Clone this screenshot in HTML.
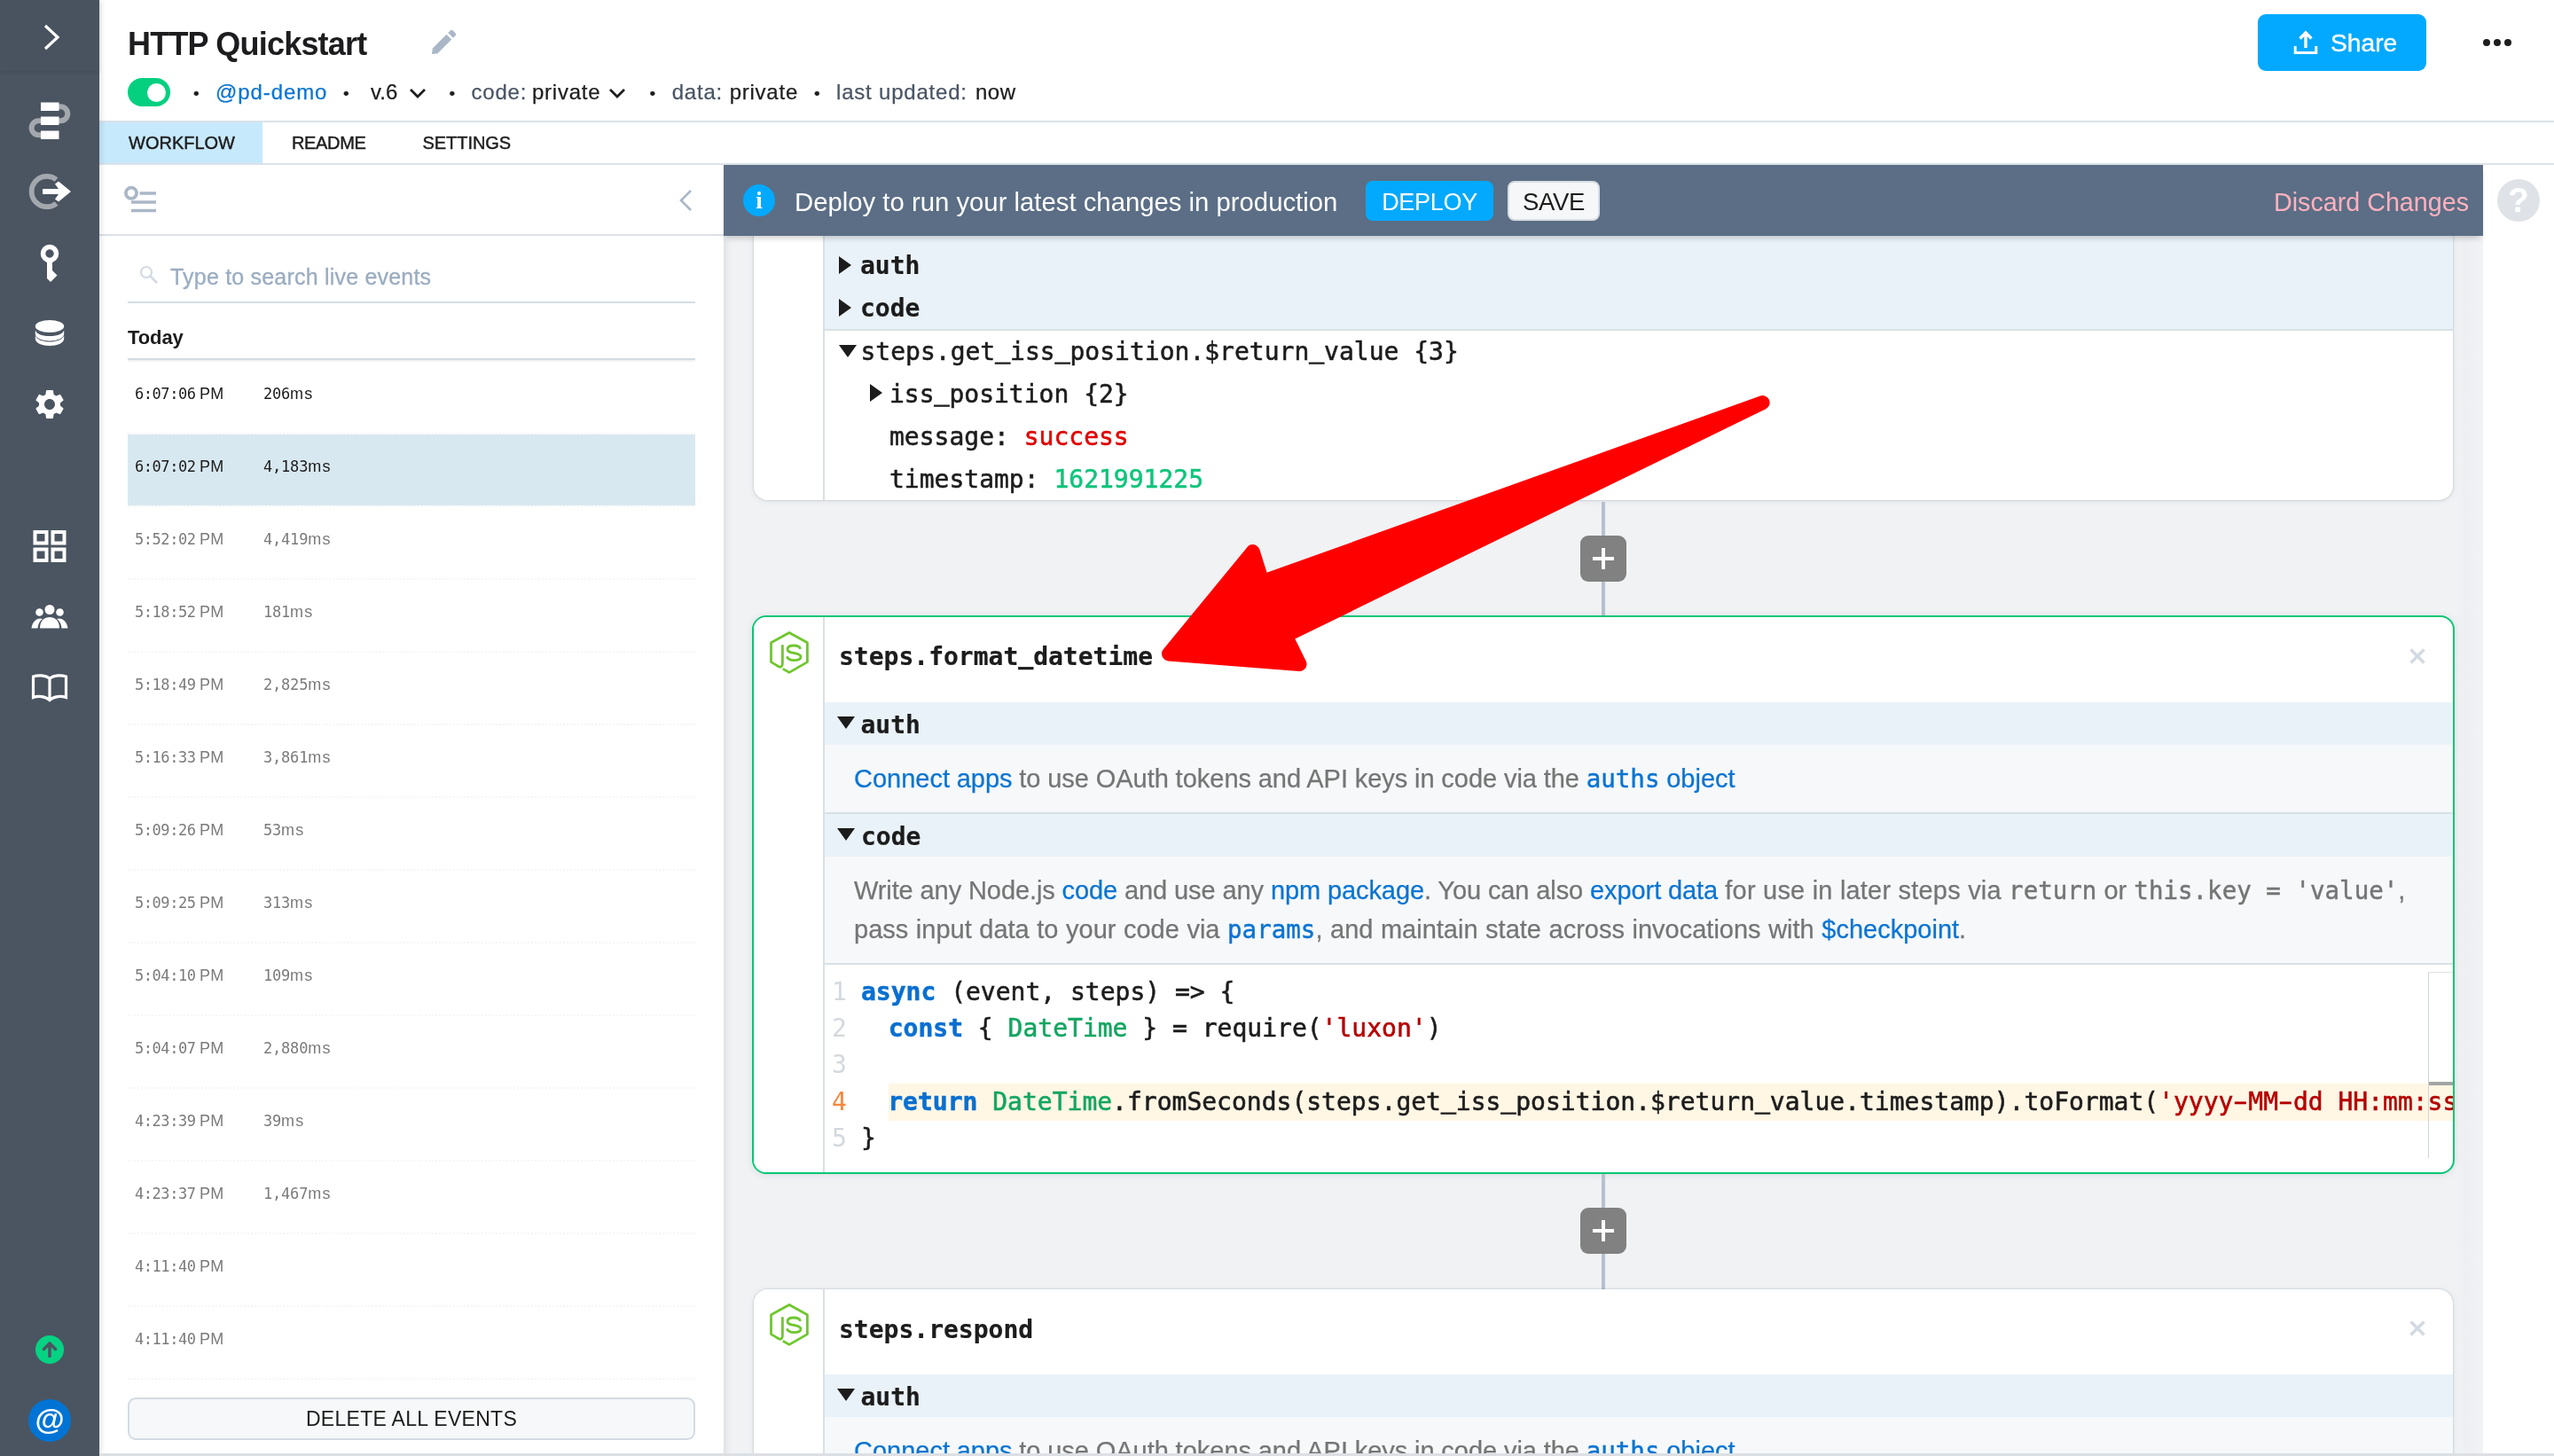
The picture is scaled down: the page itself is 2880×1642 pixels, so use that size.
<!DOCTYPE html>
<html lang="en">
<head>
<meta charset="utf-8">
<title>HTTP Quickstart</title>
<style>
*{box-sizing:border-box;margin:0;padding:0}
html,body{width:2880px;height:1642px;overflow:hidden;background:#fff}
body{position:relative;will-change:transform;font-family:"Liberation Sans",sans-serif;color:#1c1c1c;-webkit-font-smoothing:antialiased}
.abs{position:absolute}
.mono{font-family:"DejaVu Sans Mono","Liberation Mono",monospace}
a{color:#0a74d1;text-decoration:none}

/* sidebar */
#side{position:absolute;left:0;top:0;width:112px;height:1642px;background:#4b5561;z-index:30;box-shadow:2px 0 6px rgba(0,0,0,.12)}
#side .top{position:absolute;left:0;top:0;width:112px;height:80px;background:#49535f;box-shadow:0 2px 4px rgba(0,0,0,.10)}
#side svg{position:absolute}

/* header */
#hdr{position:absolute;left:112px;top:0;width:2768px;height:138px;background:#fff;border-bottom:2px solid #dbe2e8}
#title{position:absolute;left:144px;top:27.500px;font-size:36px;font-weight:700;line-height:44px;letter-spacing:-0.8px;color:#1d1d1f;white-space:nowrap}
#meta{position:absolute;left:0;top:0;font-size:24px;line-height:32px;white-space:nowrap;color:#1e1e1e}
#meta span{position:absolute;top:88px;white-space:nowrap;-webkit-text-stroke:.25px currentColor}
.dot{color:#1e1e1e;font-size:19px;margin-top:1.500px;margin-left:1px}
.lbl{color:#4a5563}

/* tabs */
#tabs{position:absolute;left:112px;top:138px;width:2768px;height:48px;background:#fff;border-bottom:2px solid #dbe2e8}
.tab{position:absolute;top:0;height:46px;line-height:46px;font-size:20px;letter-spacing:.6px;color:#1e1e1e;white-space:nowrap;-webkit-text-stroke:.45px #1e1e1e}

/* left panel */
#left{position:absolute;left:112px;top:186px;width:704px;height:1456px;background:#fff}
#left .hd{position:absolute;left:0;top:0;width:704px;height:80px;border-bottom:2px solid #dbe2e8}
.ev{position:absolute;left:32px;width:640px;height:82px;border-bottom:2px dotted #f5f6f8;font-family:"DejaVu Sans Mono","Liberation Mono",monospace;font-size:17px;letter-spacing:-.45px;color:#7b7b7b}
.ev span{position:absolute;top:0;line-height:72px;white-space:nowrap}
.ev .t{left:8px}.ev .d{left:153px;letter-spacing:-.2px}.ev i{font-style:normal;font-family:"Liberation Sans",sans-serif;font-size:18px;letter-spacing:1.2px}.ev .t i{letter-spacing:.4px;word-spacing:-1px}

/* main */
#main{position:absolute;left:816px;top:186px;width:1984px;height:1456px;background:#f0f2f4;overflow:hidden;box-shadow:inset 8px 0 8px -7px rgba(90,100,110,.20)}
#banner{position:absolute;left:816px;top:186px;width:1984px;height:80px;background:#5b6e85;z-index:10;box-shadow:0 5px 7px -3px rgba(0,0,0,.22)}
.card{position:absolute;left:34px;width:1918px;background:#fff;border-radius:16px;box-shadow:0 0 2px rgba(70,90,110,.40),0 1px 7px rgba(70,90,110,.10);overflow:hidden}
.card .lc{position:absolute;left:0;top:0;bottom:0;width:80px;border-right:2px solid #d9e0e6;background:#fff}
.sec{position:absolute;left:80px;right:0;background:#eaf2f9}
.body{position:absolute;left:80px;right:0;background:#f6f8fa}
.hl{position:absolute;left:80px;right:0;height:2px;background:#d9e0e6}
.row{position:absolute;white-space:nowrap;font-size:28px;line-height:48px}
.b{font-weight:700}
.mono u{text-decoration:none;position:relative;top:-3px;-webkit-text-stroke:1px currentColor}
.row.mono,.code.mono{-webkit-text-stroke:.55px currentColor}
.row.mono.b{-webkit-text-stroke:.2px currentColor}
.row.mono.b u{-webkit-text-stroke:.6px currentColor;top:-2px}
.hy{font-weight:400;display:inline-block;transform:scaleX(1.700)}
.p{position:absolute;white-space:nowrap;font-size:29px;line-height:44px;color:#757575;font-family:"Liberation Sans",sans-serif}
.p .mono{font-size:27.500px;-webkit-text-stroke:.45px currentColor}
.p{-webkit-text-stroke:.25px currentColor}
.tri{position:absolute;width:0;height:0}
.tri.r{border-left:14px solid #1c1c1c;border-top:10px solid transparent;border-bottom:10px solid transparent}
.tri.d{border-top:14px solid #1c1c1c;border-left:10.5px solid transparent;border-right:10.5px solid transparent}
.plus{position:absolute;width:52px;height:52px;border-radius:9px;background:#818181}
.plus:before{content:"";position:absolute;left:14px;top:23.800px;width:24px;height:4.200px;background:#fff}
.plus:after{content:"";position:absolute;left:23.900px;top:14px;width:4.200px;height:24px;background:#fff}
.vline{position:absolute;left:990px;width:4px;background:#b7c1ce}
.code{position:absolute;white-space:pre;font-size:28px;line-height:42px;color:#1c1c1c}
.ln{position:absolute;font-size:28px;line-height:42px;color:#d3d8dd;width:30px;text-align:left}
.kw{color:#0a6fd0;font-weight:700}.ty{color:#14a562}.st{color:#b50000}
</style>
</head>
<body>
<div id="side">
<div class="top"></div>
<!-- chevron -->
<svg style="left:43px;top:24px" width="32" height="36" viewBox="0 0 32 36"><path d="M8 5 L22 18 L8 31" fill="none" stroke="#fff" stroke-width="3.2"/></svg>
<!-- workflow -->
<svg style="left:28px;top:110px" width="56" height="52" viewBox="0 0 56 52">
<path d="M38 10.200 h2.300 a8 8 0 0 1 0 16 h-2.300" fill="none" stroke="#a3a8ae" stroke-width="6"/>
<path d="M18 26.200 h-2.400 a8 8 0 0 0 0 16 h2.400" fill="none" stroke="#a3a8ae" stroke-width="6"/>
<rect x="18" y="5.5" width="20.5" height="9.5" fill="#fff"/><rect x="18" y="21.5" width="20.5" height="9.5" fill="#fff"/><rect x="18" y="37.5" width="20.5" height="9.5" fill="#fff"/>
</svg>
<!-- arrow circle -->
<svg style="left:28px;top:190px" width="56" height="52" viewBox="0 0 56 52">
<path d="M35.600 12.600 A17.200 17.200 0 1 0 35.600 39.400" fill="none" stroke="#a3a8ae" stroke-width="5.800"/>
<path d="M20 23 H38 L34 17.5 L38 14.5 L52 26 L38 37.5 L34 34.5 L38 29 H20 Z" fill="#fff"/>
</svg>
<!-- key -->
<svg style="left:36px;top:272px" width="40" height="52" viewBox="0 0 40 52">
<circle cx="20" cy="14" r="7.5" fill="none" stroke="#fff" stroke-width="5.5"/>
<path d="M17 22 H23 V33 L28.5 38.5 L21 46 L17 42 Z" fill="#fff"/>
</svg>
<!-- db -->
<svg style="left:36px;top:358px" width="40" height="36" viewBox="0 0 40 36">
<ellipse cx="20" cy="10" rx="16.2" ry="7" fill="#fff"/>
<path d="M3.8 14.5 C6 19.5 13 21 20 21 S34 19.500 36.200 14.500 V18.500 C36.200 23.500 28 26.500 20 26.500 S3.800 23.500 3.800 18.500 Z" fill="#fff"/>
<path d="M3.8 20.500 C6 25.500 13 27.5 20 27.5 S34 25.500 36.200 20.500 V24 C36.200 29 28 32 20 32 S3.800 29 3.800 24 Z" fill="#fff"/>
</svg>
<!-- gear -->
<svg style="left:36px;top:436px" width="40" height="40" viewBox="0 0 24 24"><path fill="#fff" d="M19.14 12.94c.04-.3.06-.61.06-.94 0-.32-.02-.64-.07-.94l2.030-1.580c.18-.14.23-.41.12-.61l-1.920-3.320c-.12-.22-.37-.29-.59-.22l-2.390.96c-.5-.38-1.030-.7-1.620-.94l-.36-2.540c-.04-.24-.24-.41-.48-.41h-3.840c-.24 0-.43.170-.47.410l-.36 2.540c-.59.240-1.130.570-1.620.940l-2.390-.96c-.22-.08-.47 0-.59.220L2.740 8.870c-.12.210-.08.470.12.610l2.030 1.580c-.05.300-.09.630-.09.940s.02.640.07.940l-2.030 1.580c-.18.140-.23.410-.12.610l1.920 3.320c.12.220.37.290.59.220l2.390-.96c.5.380 1.030.7 1.620.94l.36 2.540c.05.240.24.410.48.410h3.840c.24 0 .44-.17.470-.41l.36-2.540c.59-.24 1.130-.56 1.620-.94l2.390.96c.22.080.47 0 .59-.22l1.920-3.320c.12-.22.070-.47-.12-.61l-2.010-1.580zM12 15.600c-1.980 0-3.600-1.620-3.600-3.600s1.620-3.600 3.600-3.600 3.600 1.620 3.600 3.600-1.620 3.600-3.600 3.600z"/></svg>
<!-- grid -->
<svg style="left:36px;top:596px" width="40" height="40" viewBox="0 0 40 40" fill="none" stroke="#fff" stroke-width="4"><rect x="3.500" y="4" width="13" height="12.500"/><rect x="23.500" y="4" width="13" height="12.500"/><rect x="3.500" y="23.500" width="13" height="12.500"/><rect x="23.500" y="23.500" width="13" height="12.500"/></svg>
<!-- people -->
<svg style="left:34px;top:680px" width="44" height="30" viewBox="0 0 44 30" fill="#fff">
<circle cx="22" cy="7.500" r="5.500"/><circle cx="10.500" cy="10.500" r="4.300"/><circle cx="33.500" cy="10.500" r="4.300"/>
<path d="M11 28.500 C11 20 16 16 22 16 S33 20 33 28.500 Z"/>
<path d="M1.500 28.500 C2.500 21.500 6.500 17.500 11.500 17.500 C12.500 17.500 13.300 17.700 14 18 C10.500 20.500 9 24 8.500 28.500 Z"/>
<path d="M42.500 28.500 C41.500 21.500 37.500 17.500 32.500 17.500 C31.500 17.500 30.700 17.700 30 18 C33.500 20.500 35 24 35.500 28.500 Z"/>
</svg>
<!-- book -->
<svg style="left:34px;top:758px" width="44" height="36" viewBox="0 0 44 36" fill="none" stroke="#fff" stroke-width="3.200" stroke-linejoin="miter"><path d="M22 7 C17 3.500 9 3 3.500 5 V28.500 C9 26.500 17 27 22 31.500 C27 27 35 26.500 40.500 28.500 V5 C35 3 27 3.500 22 7 Z M22 7 V31"/></svg>
<!-- green up -->
<svg style="left:40px;top:1506px" width="32" height="32" viewBox="0 0 32 32"><circle cx="16" cy="16" r="16" fill="#05d383"/><path d="M16 23.500 V10 M9.500 15.500 L16 9 L22.500 15.500" fill="none" stroke="#4b5561" stroke-width="3.600" stroke-linecap="round" stroke-linejoin="round"/></svg>
<!-- at -->
<div style="position:absolute;left:32px;top:1578px;width:48px;height:48px;border-radius:24px;background:#0074d4;color:#fff;font:700 34px/44px 'Liberation Sans',sans-serif;text-align:center">@</div>
</div>

<div id="hdr"></div>
<div id="title">HTTP Quickstart</div>
<svg class="abs" style="left:484px;top:32px" width="32" height="32" viewBox="0 0 32 32"><path d="M3 29 L3.800 22.500 L19.500 6.800 L25.200 12.500 L9.500 28.200 Z M21.300 5 L24 2.300 a1.800 1.800 0 0 1 2.500 0 L29.700 5.500 a1.800 1.800 0 0 1 0 2.500 L27 10.700 Z" fill="#aab7c7"/></svg>
<div class="abs" style="left:144px;top:88px;width:48px;height:32px;border-radius:16px;background:#04d080"><div class="abs" style="left:21.500px;top:5.500px;width:21px;height:21px;border-radius:10.500px;background:#fff"></div></div>
<div id="meta">
<span class="dot" style="left:217px">•</span>
<span style="left:243px;letter-spacing:.9px"><a>@pd-demo</a></span>
<span class="dot" style="left:386px">•</span>
<span style="left:418px">v.6</span>
<svg class="abs" style="left:459px;top:97px" width="24" height="16" viewBox="0 0 24 16"><path d="M4 4 L12 12 L20 4" fill="none" stroke="#1e1e1e" stroke-width="2.800"/></svg>
<span class="dot" style="left:505.500px">•</span>
<span class="lbl" style="left:531.500px;letter-spacing:.8px">code:</span>
<span style="left:600px;letter-spacing:.75px">private</span>
<svg class="abs" style="left:683.500px;top:97px" width="24" height="16" viewBox="0 0 24 16"><path d="M4 4 L12 12 L20 4" fill="none" stroke="#1e1e1e" stroke-width="2.800"/></svg>
<span class="dot" style="left:731.500px">•</span>
<span class="lbl" style="left:757.700px;letter-spacing:.8px">data:</span>
<span style="left:822.700px;letter-spacing:.75px">private</span>
<span class="dot" style="left:917px">•</span>
<span class="lbl" style="left:943px;letter-spacing:.8px">last updated:</span>
<span style="left:1100px;letter-spacing:.5px">now</span>
</div>
<div class="abs" style="left:2546px;top:16px;width:190px;height:64px;border-radius:9px;background:#02a9fe"></div>
<svg class="abs" style="left:2583px;top:32px" width="32" height="32" viewBox="0 0 32 32" fill="none" stroke="#fff" stroke-width="3"><path d="M5.200 20 V27.500 H28.800 V20"/><path d="M17 22 V5.500 M10.500 11.500 L17 5 L23.500 11.500" stroke-width="3.400"/></svg>
<div class="abs" style="left:2628px;top:28px;font-size:28.200px;line-height:40px;color:#fff;white-space:nowrap;-webkit-text-stroke:.35px #fff">Share</div>
<div class="abs" style="left:2800px;top:44px;width:8px;height:8px;border-radius:4px;background:#1e1e1e;box-shadow:12px 0 0 #1e1e1e,24px 0 0 #1e1e1e"></div>

<div id="tabs">
<div class="abs" style="left:0;top:0;width:184px;height:46px;background:#c7e9fc"></div>
<div class="tab" style="left:33px;letter-spacing:0">WORKFLOW</div>
<div class="tab" style="left:217px;letter-spacing:-.35px">README</div>
<div class="tab" style="left:364.500px;letter-spacing:-.05px">SETTINGS</div>
</div>

<div id="left">
<div class="hd"></div>
<svg class="abs" style="left:26px;top:22px" width="40" height="36" viewBox="0 0 40 36"><circle cx="10" cy="9.800" r="6.100" fill="none" stroke="#aab7c7" stroke-width="3.800"/><path d="M19.500 10 H38 M10 20 H38 M10 29.500 H38" stroke="#aab7c7" stroke-width="3.600" fill="none"/></svg>
<svg class="abs" style="left:650px;top:26px" width="24" height="28" viewBox="0 0 24 28"><path d="M17 3 L6 14 L17 25" fill="none" stroke="#aab7c7" stroke-width="2.600"/></svg>
<svg class="abs" style="left:44px;top:111.500px" width="24" height="24" viewBox="0 0 24 24"><circle cx="9" cy="9" r="6" fill="none" stroke="#d3dae1" stroke-width="2.200"/><path d="M13.500 13.500 L21 21" stroke="#d3dae1" stroke-width="2.600"/></svg>
<div class="abs" style="left:80px;top:106px;font-size:25px;letter-spacing:.2px;line-height:40px;color:#9aacc0;-webkit-text-stroke:.3px #9aacc0;white-space:nowrap">Type to search live events</div>
<div class="abs" style="left:32px;top:154px;width:640px;height:2px;background:#d5dde4"></div>
<div class="abs" style="left:32px;top:177px;font-size:22px;letter-spacing:-.1px;font-weight:700;line-height:36px;color:#1c1c1c;white-space:nowrap">Today</div>
<div class="abs" style="left:32px;top:218px;width:640px;height:2px;background:#d3dbe3;box-shadow:0 2px 0 #f1f3f5"></div>
<div class="ev" style="top:222px;color:#1c1c1c;"><span class="t">6:07:06<i> PM</i></span><span class="d">206<i>ms</i></span></div>
<div class="ev" style="top:304px;color:#1c1c1c;background:#d8e8f0;background-clip:padding-box;"><span class="t">6:07:02<i> PM</i></span><span class="d">4,183<i>ms</i></span></div>
<div class="ev" style="top:386px;"><span class="t">5:52:02<i> PM</i></span><span class="d">4,419<i>ms</i></span></div>
<div class="ev" style="top:468px;"><span class="t">5:18:52<i> PM</i></span><span class="d">181<i>ms</i></span></div>
<div class="ev" style="top:550px;"><span class="t">5:18:49<i> PM</i></span><span class="d">2,825<i>ms</i></span></div>
<div class="ev" style="top:632px;"><span class="t">5:16:33<i> PM</i></span><span class="d">3,861<i>ms</i></span></div>
<div class="ev" style="top:714px;"><span class="t">5:09:26<i> PM</i></span><span class="d">53<i>ms</i></span></div>
<div class="ev" style="top:796px;"><span class="t">5:09:25<i> PM</i></span><span class="d">313<i>ms</i></span></div>
<div class="ev" style="top:878px;"><span class="t">5:04:10<i> PM</i></span><span class="d">109<i>ms</i></span></div>
<div class="ev" style="top:960px;"><span class="t">5:04:07<i> PM</i></span><span class="d">2,880<i>ms</i></span></div>
<div class="ev" style="top:1042px;"><span class="t">4:23:39<i> PM</i></span><span class="d">39<i>ms</i></span></div>
<div class="ev" style="top:1124px;"><span class="t">4:23:37<i> PM</i></span><span class="d">1,467<i>ms</i></span></div>
<div class="ev" style="top:1206px;"><span class="t">4:11:40<i> PM</i></span><span class="d"></span></div>
<div class="ev" style="top:1288px;"><span class="t">4:11:40<i> PM</i></span><span class="d"></span></div>
<div class="abs" style="left:0;top:1370px;width:704px;height:86px;background:#fff"></div>
<div class="abs" style="left:32px;top:1390px;width:640px;height:48px;border:2px solid #d3dbe2;border-radius:9px;background:#f6f8fa;text-align:center;font-size:23px;line-height:44px;letter-spacing:.3px;color:#1c1c1c">DELETE ALL EVENTS</div>
</div>

<div id="main">
<!-- card 1 : top hidden by banner. main top = 186 -->
<div class="card" style="top:-60px;height:438px;width:1916px">
  <div class="lc"></div>
  <div class="sec" style="top:0;height:245px"></div>
  <div class="hl" style="top:245px"></div>
  <div class="tri r" style="left:96px;top:162.500px"></div>
  <div class="row mono b" style="left:120px;top:150px">auth</div>
  <div class="tri r" style="left:96px;top:210.500px"></div>
  <div class="row mono b" style="left:120px;top:198px">code</div>
  <div class="tri d" style="left:96px;top:263px"></div>
  <div class="row mono" style="left:120.500px;top:247px">steps.get<u>_</u>iss<u>_</u>position.$return<u>_</u>value {3}</div>
  <div class="tri r" style="left:131px;top:307px"></div>
  <div class="row mono" style="left:153px;top:294.500px">iss<u>_</u>position {2}</div>
  <div class="row mono" style="left:153px;top:343px">message: <span style="color:#e00000">success</span></div>
  <div class="row mono" style="left:153px;top:391px">timestamp: <span style="color:#10c47c">1621991225</span></div>
</div>
<div class="vline" style="top:380px;height:128px"></div>
<div class="plus" style="left:966px;top:418px"></div>

<!-- card 2 -->
<div class="card" style="top:508px;height:630px;box-shadow:0 1px 8px rgba(40,50,60,.10);border:2px solid #04c775;left:32px;width:1920px">
 <div style="position:absolute;left:0;top:-2px;width:1918px;height:630px">
  <div class="lc"></div>
  <svg class="abs" style="left:16px;top:14px" width="48" height="54" viewBox="866 708 48 54" fill="none" stroke="#6fc72e" stroke-width="2.800"><path d="M882.400 727.300 V747.600 C882.400 753.600 879 753 875.500 750.100 L869.500 746.600 V724.800 L890 713.500 L910.400 724.800 V746.600 L890 758.400 L882.800 754.300" stroke-linejoin="round"/><path d="M902.600 731.800 C901.800 729 898.500 728 895 728 C891 728 888 729.500 888 732.300 C888 735.300 891.500 735.800 895.500 736.500 C899.500 737.200 903 738 903 740.800 C903 743.300 899.500 744.600 895.500 744.600 C891.300 744.600 888 743.300 887.500 740.300"/></svg>
  <div class="row mono b" style="left:96px;top:23px">steps.format<u>_</u>datetime</div>
  <svg class="abs" style="left:1866px;top:36px" width="20" height="20" viewBox="0 0 20 20"><path d="M2.500 2.500 L17.500 17.500 M17.500 2.500 L2.500 17.500" stroke="#d3dae1" stroke-width="3.600" fill="none"/></svg>
  <div class="sec" style="top:98px;height:48px"></div>
  <div class="tri d" style="left:93.500px;top:114px"></div>
  <div class="row mono b" style="left:120.500px;top:99.500px">auth</div>
  <div class="body" style="top:146px;height:76px"></div>
  <div class="p" style="left:113px;top:162px;word-spacing:-.35px"><a>Connect apps</a> to use OAuth tokens and API keys in code via the <a><span class="mono">auths</span> object</a></div>
  <div class="hl" style="top:222px"></div>
  <div class="sec" style="top:224px;height:48px"></div>
  <div class="tri d" style="left:93.500px;top:240px"></div>
  <div class="row mono b" style="left:121px;top:225.500px">code</div>
  <div class="body" style="top:272px;height:120px"></div>
  <div class="p" style="left:113px;top:288px"><span style="letter-spacing:-.1px">Write any Node.js <a>code</a> and use any <a>npm package</a>. You can also <a>export data</a></span><span style="letter-spacing:.2px"> for use in later steps via </span><span class="mono">return</span> or <span class="mono">this.key = 'value'</span>,</div>
  <div class="p" style="left:113px;top:332px;word-spacing:.5px">pass input data to your code via <a><span class="mono">params</span></a>, and maintain state across invocations with <a>$checkpoint</a>.</div>
  <div class="hl" style="top:392px"></div>
  <!-- editor -->
  <div class="abs" style="left:152px;top:528px;right:0;height:41.500px;background:#fff6e4"></div>
  <div class="ln mono" style="left:88px;top:404px">1</div>
  <div class="ln mono" style="left:88px;top:445px">2</div>
  <div class="ln mono" style="left:88px;top:486px">3</div>
  <div class="ln mono" style="left:88px;top:528px;color:#f5873e">4</div>
  <div class="ln mono" style="left:88px;top:569px">5</div>
  <div class="code mono" style="left:121px;top:404px"><span class="kw">async</span> (event, steps) =&gt; {</div>
  <div class="code mono" style="left:118px;top:445px">  <span class="kw">const</span> { <span class="ty">DateTime</span> } = require(<span class="st">'luxon'</span>)</div>
  <div class="code mono" style="left:117.500px;top:528px">  <span class="kw">return</span> <span class="ty">DateTime</span>.fromSeconds(steps.get<u>_</u>iss<u>_</u>position.$return<u>_</u>value.timestamp).toFormat(<span class="st">'yyyy<b class="hy">-</b>MM<b class="hy">-</b>dd HH:mm:ss'</span>)</div>
  <div class="code mono" style="left:121px;top:569px">}</div>
  <div class="abs" style="left:1888px;top:402px;width:32px;height:210px;border-left:1.500px solid #d0d3d6;border-top:1.500px solid #dfe2e5"></div>
  <div class="abs" style="left:1889px;top:526px;width:31px;height:4px;background:#a3a3a3"></div>
 </div>
</div>
<div class="vline" style="top:1138px;height:130px"></div>
<div class="plus" style="left:966px;top:1176px"></div>

<!-- card 3 -->
<div class="card" style="top:1268px;height:400px;width:1916px">
  <div class="lc"></div>
  <svg class="abs" style="left:16px;top:12px" width="48" height="54" viewBox="866 708 48 54" fill="none" stroke="#6fc72e" stroke-width="2.800"><path d="M882.400 727.300 V747.600 C882.400 753.600 879 753 875.500 750.100 L869.500 746.600 V724.800 L890 713.500 L910.400 724.800 V746.600 L890 758.400 L882.800 754.300" stroke-linejoin="round"/><path d="M902.600 731.800 C901.800 729 898.500 728 895 728 C891 728 888 729.500 888 732.300 C888 735.300 891.500 735.800 895.500 736.500 C899.500 737.200 903 738 903 740.800 C903 743.300 899.500 744.600 895.500 744.600 C891.300 744.600 888 743.300 887.500 740.300"/></svg>
  <div class="row mono b" style="left:96px;top:22px">steps.respond</div>
  <svg class="abs" style="left:1866px;top:34px" width="20" height="20" viewBox="0 0 20 20"><path d="M2.500 2.500 L17.500 17.500 M17.500 2.500 L2.500 17.500" stroke="#d3dae1" stroke-width="3.600" fill="none"/></svg>
  <div class="sec" style="top:96px;height:48px"></div>
  <div class="tri d" style="left:93.500px;top:112px"></div>
  <div class="row mono b" style="left:120.500px;top:97.5px">auth</div>
  <div class="body" style="top:144px;height:76px"></div>
  <div class="p" style="left:113px;top:160px;word-spacing:-.35px"><a>Connect apps</a> to use OAuth tokens and API keys in code via the <a><span class="mono">auths</span> object</a></div>
</div>
<div class="abs" style="left:1952px;top:0;width:32px;height:1456px;background:linear-gradient(90deg,rgba(240,242,244,0),#edeff2 40%,#f2f3f5)"></div>
</div>
<div class="abs" style="left:112px;top:1639px;width:2768px;height:3px;background:#dcdfe3;z-index:40"></div>

<div id="banner">
<div class="abs" style="left:22px;top:22px;width:36px;height:36px;border-radius:18px;background:#03a9fd;color:#fff;text-align:center;font:700 27px/36px 'Liberation Serif',serif">i</div>
<div class="abs" style="left:80px;top:21.500px;font-size:29.300px;line-height:40px;color:#fff;white-space:nowrap">Deploy to run your latest changes in production</div>
<div class="abs" style="left:724px;top:18px;width:144px;height:45px;border-radius:8px;background:#03a9fd;color:#fff;text-align:center;font-size:27px;letter-spacing:-.3px;line-height:48px">DEPLOY</div>
<div class="abs" style="left:884px;top:18px;width:104px;height:45px;border-radius:8px;background:#f6f7f9;border:2px solid #d9dee4;color:#1c1c1c;text-align:center;font-size:27.500px;letter-spacing:-.3px;line-height:44px">SAVE</div>
<div class="abs" style="right:16px;top:21.500px;font-size:28.700px;line-height:40px;color:#ffb1bf;white-space:nowrap">Discard Changes</div>
</div>
<div class="abs" style="left:2816px;top:202px;width:48px;height:48px;border-radius:24px;background:#dfe3e8;color:#fff;text-align:center;font:700 39px/47px 'Liberation Sans',sans-serif">?</div>

<svg class="abs" style="left:1280px;top:420px;z-index:20" width="740" height="360" viewBox="1280 420 740 360"><path d="M1987.600 454.100 L1423.500 656.100 L1412.700 622 L1318 737.400 L1465.500 749 L1449.600 716.800 Z" fill="#fe0000" stroke="#fe0000" stroke-width="16" stroke-linejoin="round"/></svg>

</body>
</html>
